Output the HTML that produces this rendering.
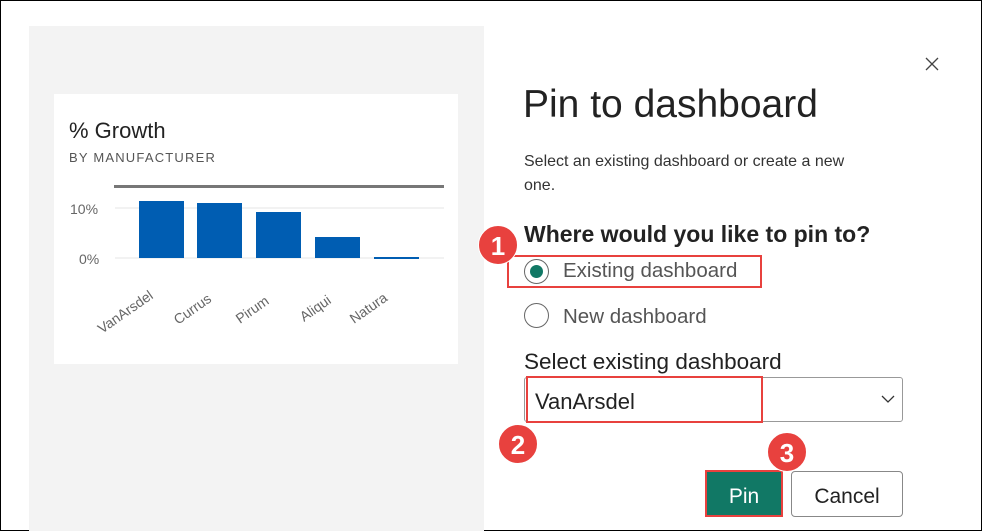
<!DOCTYPE html>
<html><head><style>
body{margin:0;width:982px;height:531px;overflow:hidden;font-family:"Liberation Sans",sans-serif;background:#fff;position:relative}
.a{position:absolute}
.badge{position:absolute;width:40px;height:40px;border-radius:50%;background:#e8413e;color:#fff;font-size:26px;font-weight:bold;line-height:40px;text-align:center;border:1px solid #fff;box-sizing:border-box}
</style></head><body>
<div class="a" style="left:0;top:0;width:980px;height:529px;border:1px solid #000"></div>
<div class="a" style="left:29px;top:26px;width:455px;height:505px;background:#f3f3f3"></div>
<div class="a" style="left:54px;top:94px;width:404px;height:270px;background:#fff"></div>
<div class="a" style="left:69px;top:118px;font-size:22px;color:#222">% Growth</div>
<div class="a" style="left:69px;top:150px;font-size:13px;color:#555;letter-spacing:1.2px">BY MANUFACTURER</div>
<svg class="a" style="left:54px;top:94px" width="404" height="270">
<rect x="60" y="91" width="330" height="3" fill="#777"/>
<line x1="61" y1="114" x2="390" y2="114" stroke="#e6e6e6"/>
<line x1="61" y1="164" x2="390" y2="164" stroke="#e6e6e6"/>
<text x="16" y="120" font-size="14" fill="#666" font-family="Liberation Sans">10%</text>
<text x="25" y="170" font-size="14" fill="#666" font-family="Liberation Sans">0%</text>
<rect x="85" y="107" width="45" height="57" fill="#005db2"/>
<rect x="143" y="109" width="45" height="55" fill="#005db2"/>
<rect x="202" y="118" width="45" height="46" fill="#005db2"/>
<rect x="261" y="143" width="45" height="21" fill="#005db2"/>
<rect x="320" y="163" width="45" height="2" fill="#005db2"/>
<g font-size="14" fill="#666" font-family="Liberation Sans">
<text transform="translate(48,240) rotate(-35)">VanArsdel</text>
<text transform="translate(124,231) rotate(-35)">Currus</text>
<text transform="translate(186,230) rotate(-35)">Pirum</text>
<text transform="translate(250,228) rotate(-35)">Aliqui</text>
<text transform="translate(300,230) rotate(-35)">Natura</text>
</g></svg>
<svg class="a" style="left:925px;top:57px" width="14" height="14"><path d="M1 1L13 13M13 1L1 13" stroke="#444" stroke-width="1.3"/></svg>
<div class="a" style="left:523px;top:83px;font-size:39px;color:#222">Pin to dashboard</div>
<div class="a" style="left:524px;top:150px;font-size:16px;color:#333;line-height:24px;width:350px">Select an existing dashboard or create a new one.</div>
<div class="a" style="left:524px;top:221px;font-size:23px;font-weight:bold;color:#222">Where would you like to pin to?</div>
<div class="a" style="left:524px;top:259px;width:25px;height:25px;border:1px solid #666;border-radius:50%;box-sizing:border-box"></div>
<div class="a" style="left:530px;top:265px;width:13px;height:13px;background:#117865;border-radius:50%"></div>
<div class="a" style="left:563px;top:259px;font-size:20.5px;color:#555">Existing dashboard</div>
<div class="a" style="left:507px;top:255px;width:255px;height:33px;border:2px solid #e8413e;box-sizing:border-box"></div>
<div class="a" style="left:524px;top:303px;width:25px;height:25px;border:1px solid #666;border-radius:50%;box-sizing:border-box"></div>
<div class="a" style="left:563px;top:305px;font-size:20.5px;color:#555">New dashboard</div>
<div class="a" style="left:524px;top:349px;font-size:22.5px;color:#222">Select existing dashboard</div>
<div class="a" style="left:524px;top:377px;width:379px;height:45px;border:1px solid #999;border-radius:3px;box-sizing:border-box"></div>
<div class="a" style="left:526px;top:376px;width:237px;height:47px;border:2px solid #e8413e;box-sizing:border-box"></div>
<div class="a" style="left:535px;top:389px;font-size:22px;color:#222">VanArsdel</div>
<svg class="a" style="left:881px;top:395px" width="14" height="9"><path d="M1 1L7 7L13 1" fill="none" stroke="#333" stroke-width="1.3"/></svg>
<div class="a" style="left:705px;top:470px;width:78px;height:47px;background:#117865;border:2px solid #e8413e;box-sizing:border-box;color:#fff;font-size:21px;text-align:center;line-height:50px">Pin</div>
<div class="a" style="left:791px;top:471px;width:112px;height:46px;border:1px solid #888;border-radius:4px;box-sizing:border-box;color:#222;font-size:21px;text-align:center;line-height:50px">Cancel</div>
<div class="badge" style="left:478px;top:225px">1</div>
<div class="badge" style="left:498px;top:424px">2</div>
<div class="badge" style="left:767px;top:432px">3</div>
</body></html>
